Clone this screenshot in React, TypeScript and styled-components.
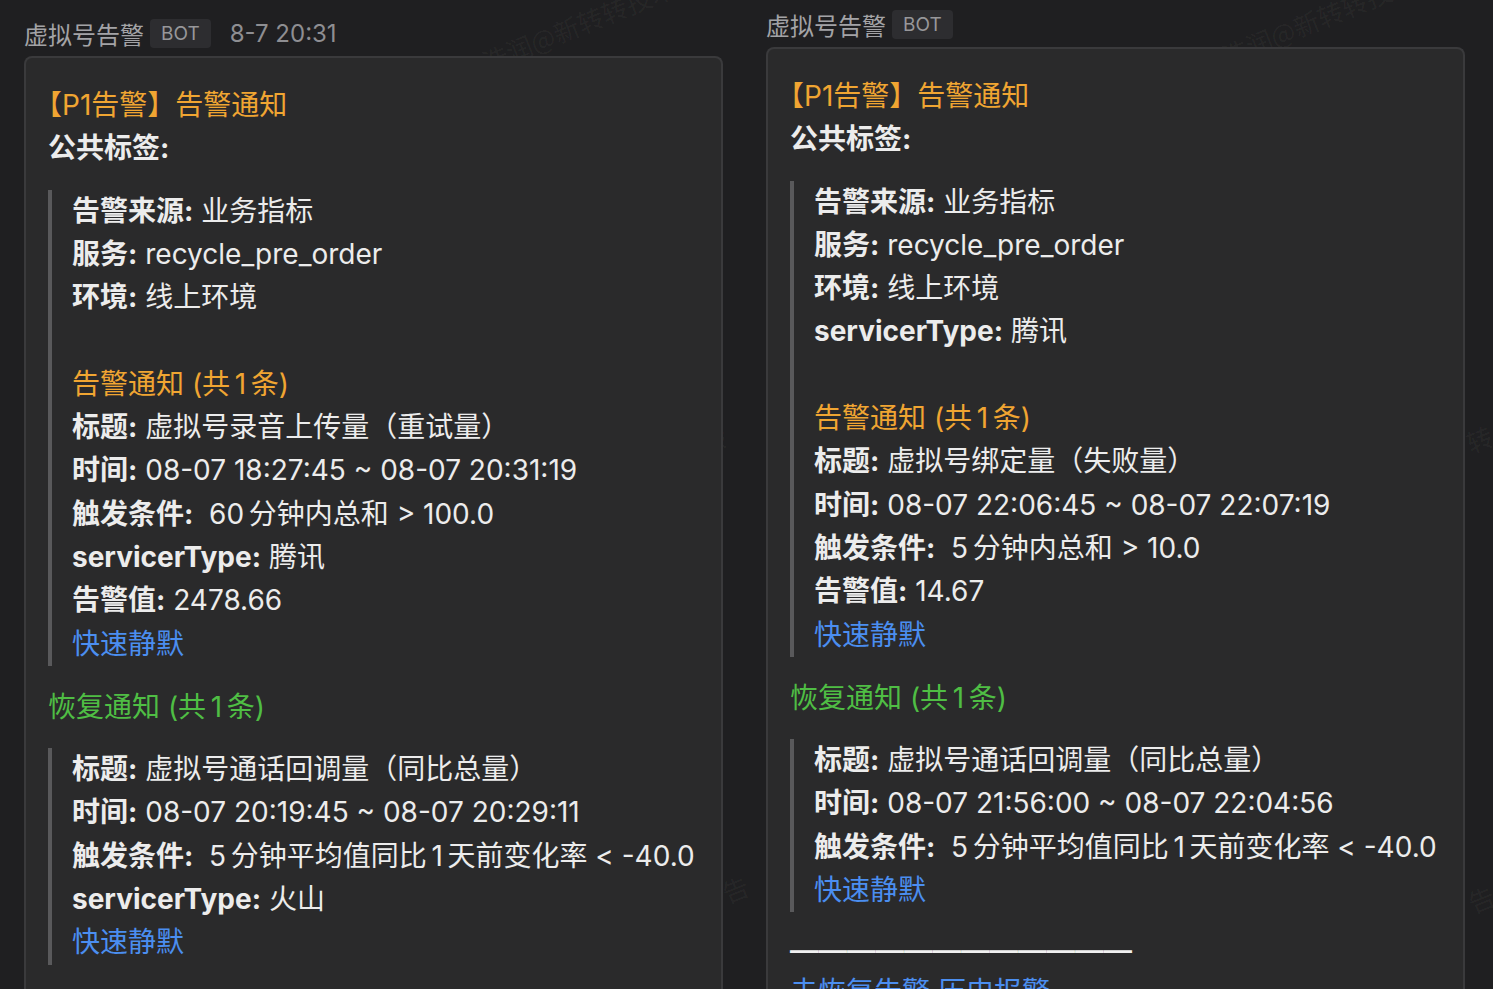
import * as React from 'react'
import styled, { createGlobalStyle } from 'styled-components'

const GlobalStyle = createGlobalStyle`
  html, body {
    margin: 0;
    padding: 0;
    background: #1f1f21;
  }
  body {
    font-family: 'Inter', 'Noto Sans CJK SC', sans-serif;
    -webkit-font-smoothing: antialiased;
  }
`

const Page = styled.div`
  position: relative;
  display: flex;
  gap: 43px;
  height: 989px;
  padding-left: 24px;
  overflow: hidden;
  background: #1f1f21;
  box-sizing: border-box;
`

const Watermark = styled.span`
  position: absolute;
  z-index: 0;
  font-family: 'Noto Sans CJK SC', sans-serif;
  font-size: 26px;
  color: rgba(255, 255, 255, 0.045);
  transform: rotate(-22deg);
  white-space: nowrap;
  pointer-events: none;
`

type ColumnProps = { $top: number }
const Column = styled.div<ColumnProps>`
  position: relative;
  z-index: 1;
  width: 699px;
  flex: 0 0 699px;
  display: flex;
  flex-direction: column;
  padding-top: ${p => p.$top}px;
`

const Header = styled.div`
  display: flex;
  align-items: center;
  height: 34px;
  margin-bottom: 6px;
`

const Sender = styled.span`
  font-family: 'Noto Sans CJK SC', sans-serif;
  font-size: 24px;
  color: #a3a3a6;
`

const Badge = styled.span`
  margin-left: 6px;
  padding: 0 11px;
  height: 29px;
  line-height: 29px;
  border-radius: 4px;
  background: #2d2d30;
  color: #97979a;
  font-size: 19px;
`

const Time = styled.span`
  margin-left: 19px;
  font-size: 24px;
  color: #8e8e92;
`

const Card = styled.div`
  flex: 1;
  background: #2a2a2b;
  border: 2px solid #3a3a3c;
  border-bottom: none;
  border-radius: 8px 8px 0 0;
  padding: 26px 22px 0;
`

type LineProps = { $color?: string }
const Line = styled.div<LineProps>`
  font-size: 28px;
  line-height: 43.3px;
  height: 43.3px;
  color: ${p => p.$color || '#ececec'};
  white-space: nowrap;
`

const Title = styled(Line)`
  margin-left: -14px;
`

const Label = styled.b`
  font-weight: 700;
`

const Quote = styled.div`
  border-left: 4px solid #59595b;
  padding-left: 20px;
  margin: 19px 0 20px 0;
`

const Separator = styled.div`
  font-family: 'Liberation Sans', sans-serif;
  font-weight: 700;
  font-size: 28.5px;
  line-height: 43px;
  height: 43px;
  color: #f0f0f0;
  white-space: nowrap;
  margin-top: -4px;
`

const ORANGE = '#f0a532'
const GREEN = '#4fbe44'
const BLUE = '#4b8ef0'

// small gap PingFang leaves between digits and CJK
const G = '\u2006'

type Field = [string, string]
type Message = {
  time?: string
  top: number
  common: Field[]
  alert: Field[]
  recover: Field[]
  tail?: boolean
}

const messages: Message[] = [
  {
    time: '8-7 20:31',
    top: 16,
    common: [
      ['告警来源:', ' 业务指标'],
      ['服务:', ' recycle_pre_order'],
      ['环境:', ' 线上环境'],
    ],
    alert: [
      ['标题:', ' 虚拟号录音上传量（重试量）'],
      ['时间:', ' 08-07 18:27:45 ~ 08-07 20:31:19'],
      ['触发条件:', `\u00a0 60${G}分钟内总和 > 100.0`],
      ['servicerType:', ' 腾讯'],
      ['告警值:', ' 2478.66'],
    ],
    recover: [
      ['标题:', ' 虚拟号通话回调量（同比总量）'],
      ['时间:', ' 08-07 20:19:45 ~ 08-07 20:29:11'],
      ['触发条件:', `\u00a0 5${G}分钟平均值同比${G}1${G}天前变化率 < -40.0`],
      ['servicerType:', ' 火山'],
    ],
  },
  {
    top: 7,
    common: [
      ['告警来源:', ' 业务指标'],
      ['服务:', ' recycle_pre_order'],
      ['环境:', ' 线上环境'],
      ['servicerType:', ' 腾讯'],
    ],
    alert: [
      ['标题:', ' 虚拟号绑定量（失败量）'],
      ['时间:', ' 08-07 22:06:45 ~ 08-07 22:07:19'],
      ['触发条件:', `\u00a0 5${G}分钟内总和 > 10.0`],
      ['告警值:', ' 14.67'],
    ],
    recover: [
      ['标题:', ' 虚拟号通话回调量（同比总量）'],
      ['时间:', ' 08-07 21:56:00 ~ 08-07 22:04:56'],
      ['触发条件:', `\u00a0 5${G}分钟平均值同比${G}1${G}天前变化率 < -40.0`],
    ],
    tail: true,
  },
]

function Fields({ items }: { items: Field[] }) {
  return (
    <>
      {items.map(([k, v]) => (
        <Line key={k}>
          <Label>{k}</Label>
          {v}
        </Line>
      ))}
    </>
  )
}

function AlertCard({ msg }: { msg: Message }) {
  return (
    <Column $top={msg.top}>
      <Header>
        <Sender>虚拟号告警</Sender>
        <Badge>BOT</Badge>
        {msg.time ? <Time>{msg.time}</Time> : null}
      </Header>
      <Card>
        <Title $color={ORANGE}>【P1告警】告警通知</Title>
        <Line>
          <Label>公共标签:</Label>
        </Line>
        <Quote>
          <Fields items={msg.common} />
          <Line />
          <Line $color={ORANGE}>告警通知 (共{G}1{G}条)</Line>
          <Fields items={msg.alert} />
          <Line $color={BLUE}>快速静默</Line>
        </Quote>
        <Line $color={GREEN}>恢复通知 (共{G}1{G}条)</Line>
        <Quote>
          <Fields items={msg.recover} />
          <Line $color={BLUE}>快速静默</Line>
        </Quote>
        {msg.tail ? (
          <>
            <Separator>————————————</Separator>
            <Line $color={BLUE}>未恢复告警 历史报警</Line>
          </>
        ) : null}
      </Card>
    </Column>
  )
}

export default function App(): JSX.Element {
  return (
    <>
      <GlobalStyle />
      <Page>
        <Watermark style={{ left: 450, top: 10 }}>金浩润@新转转技术</Watermark>
        <Watermark style={{ left: 1190, top: 4 }}>金浩润@新转转技术</Watermark>
        <Watermark style={{ left: 700, top: 420 }}>转</Watermark>
        <Watermark style={{ left: 1466, top: 420 }}>转</Watermark>
        <Watermark style={{ left: 722, top: 870 }}>告</Watermark>
        <Watermark style={{ left: 1468, top: 880 }}>告</Watermark>
        {messages.map((m, i) => (
          <AlertCard key={i} msg={m} />
        ))}
      </Page>
    </>
  )
}
